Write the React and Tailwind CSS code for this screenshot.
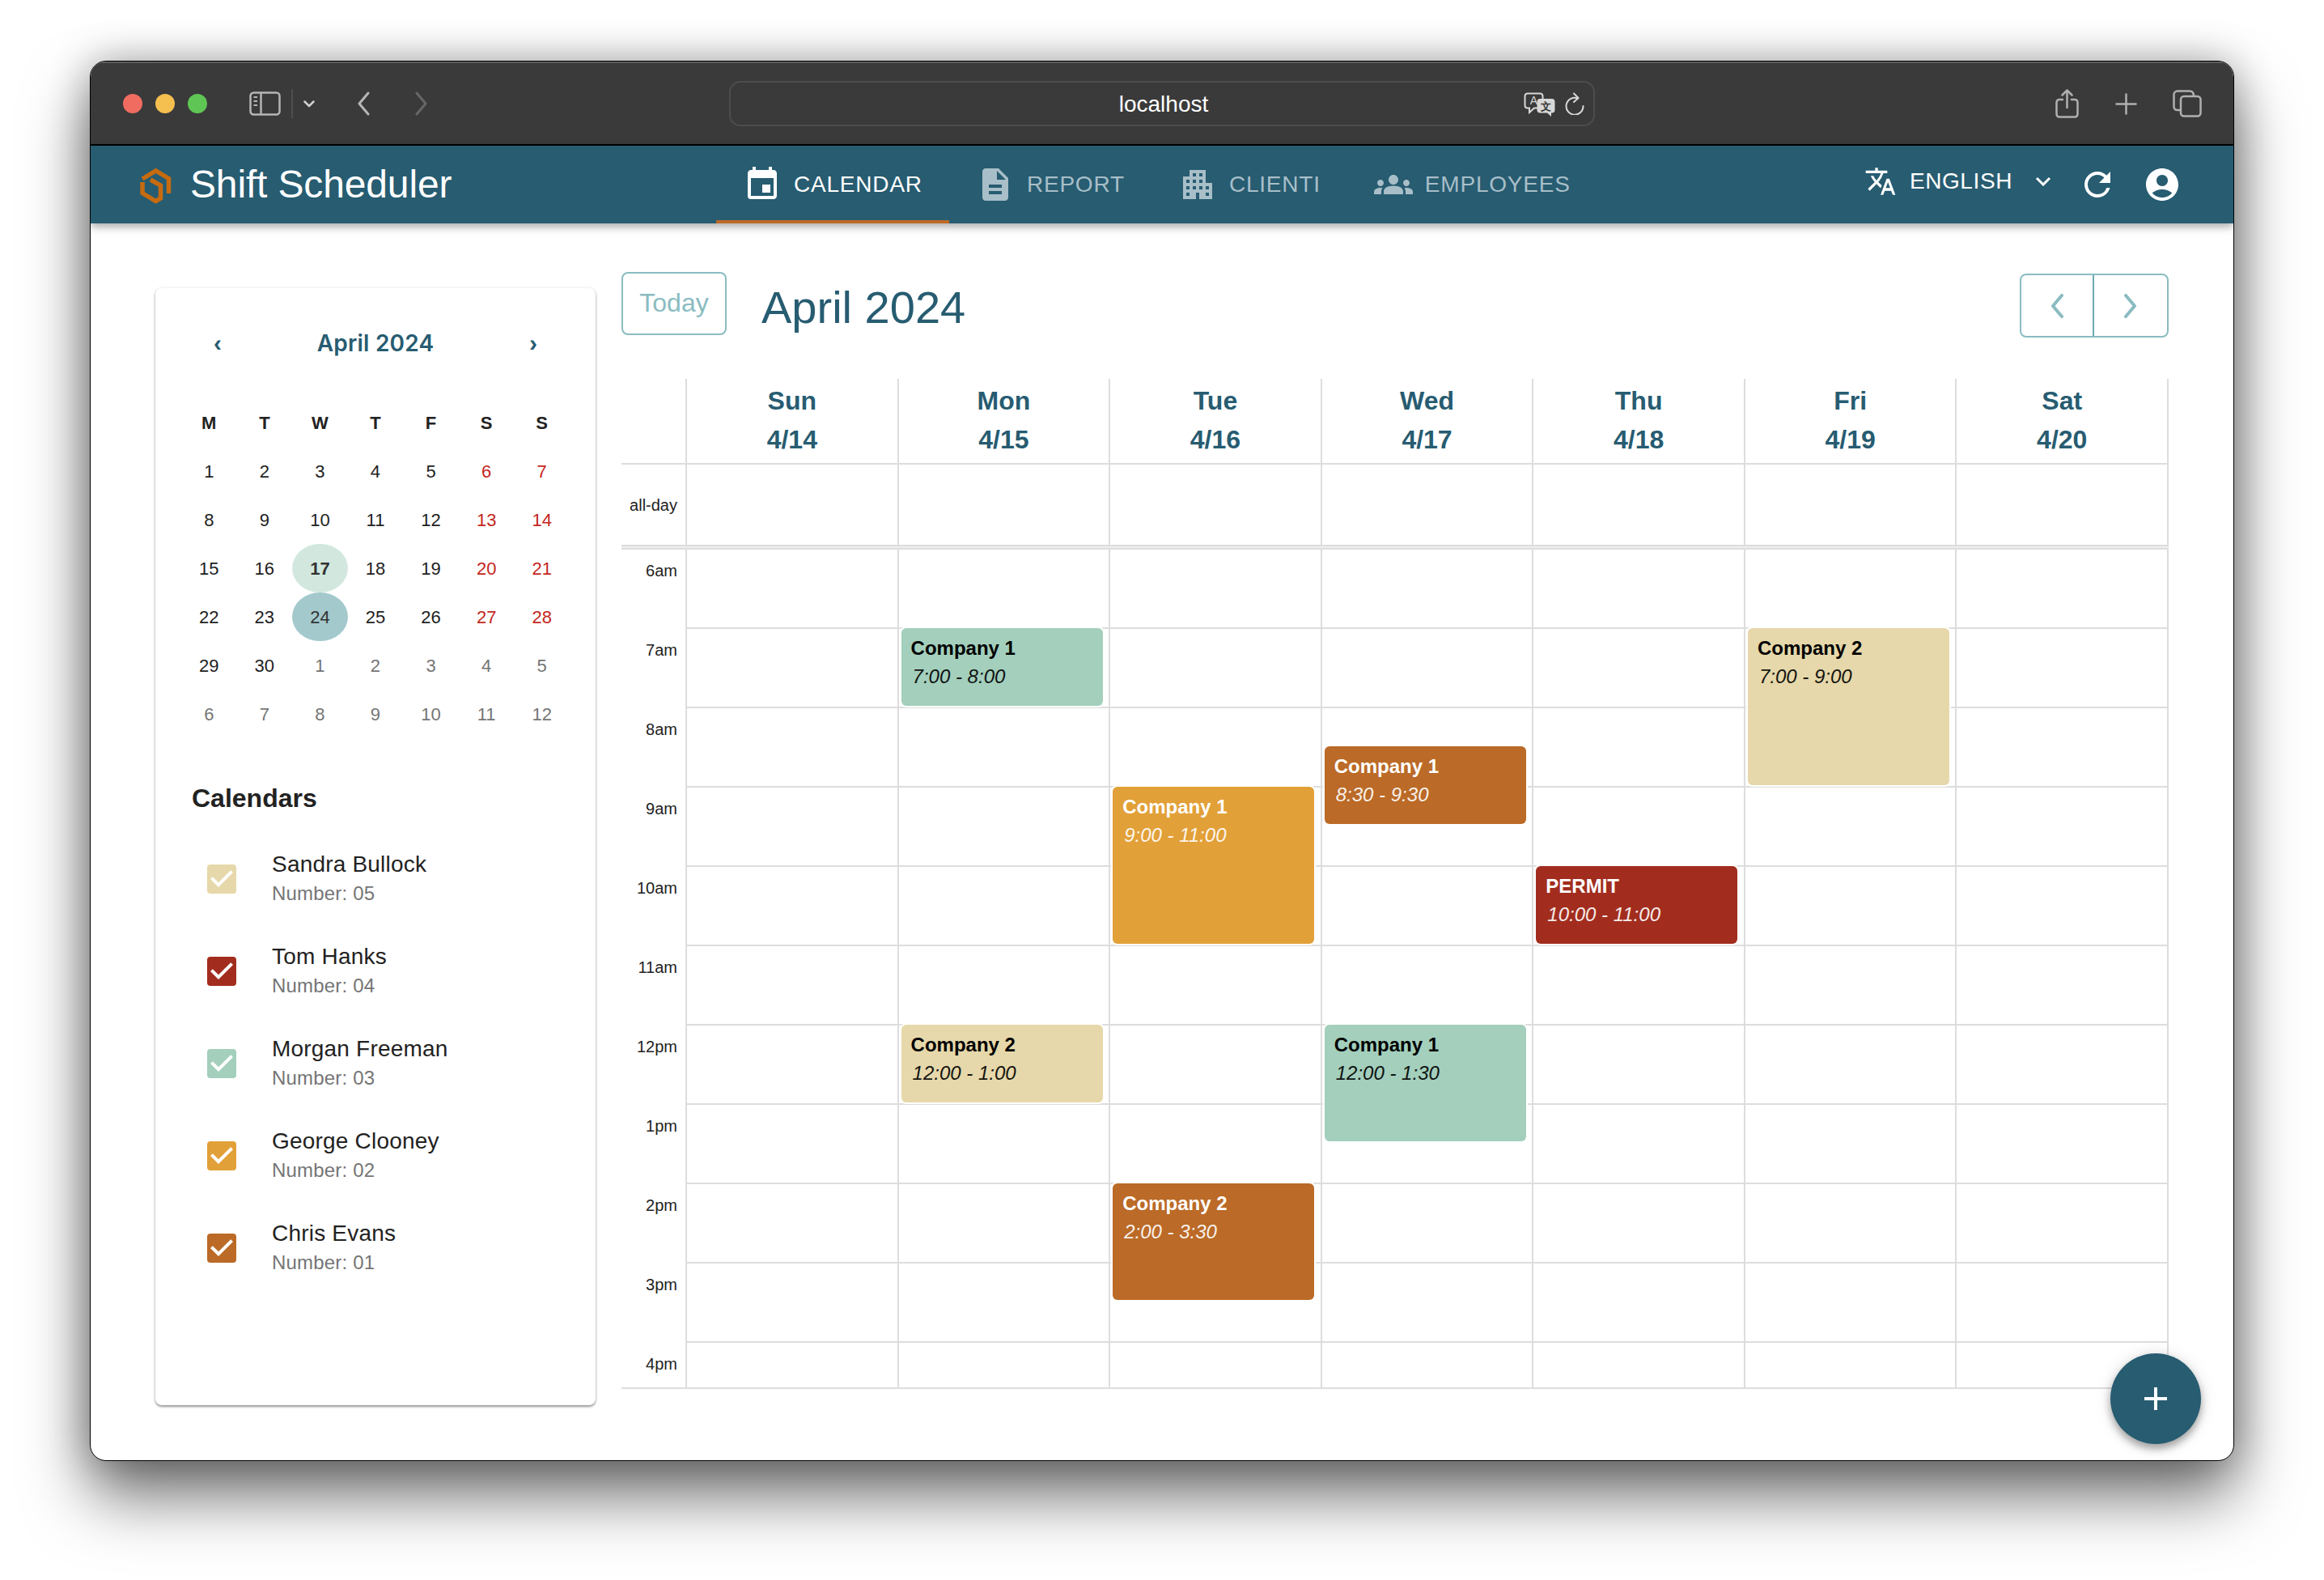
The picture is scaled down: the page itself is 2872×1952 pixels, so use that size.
import React from 'react';
import { MdEvent, MdDescription, MdApartment, MdGroups, MdTranslate, MdRefresh, MdAccountCircle, MdAdd, MdCheckBox } from 'react-icons/md';

const tabs = [
    { label: 'CALENDAR', Icon: MdEvent, active: true },
    { label: 'REPORT', Icon: MdDescription },
    { label: 'CLIENTI', Icon: MdApartment },
    { label: 'EMPLOYEES', Icon: MdGroups },
];

const weeks = [
    [1, 2, 3, 4, 5, 6, 7],
    [8, 9, 10, 11, 12, 13, 14],
    [15, 16, 17, 18, 19, 20, 21],
    [22, 23, 24, 25, 26, 27, 28],
    [29, 30, 1, 2, 3, 4, 5],
    [6, 7, 8, 9, 10, 11, 12],
];

const people = [
    { name: 'Sandra Bullock', number: '05', color: 'text-[#e6d8aa]' },
    { name: 'Tom Hanks', number: '04', color: 'text-[#a22d1e]' },
    { name: 'Morgan Freeman', number: '03', color: 'text-[#a3cfbc]' },
    { name: 'George Clooney', number: '02', color: 'text-[#e2a038]' },
    { name: 'Chris Evans', number: '01', color: 'text-[#bb6a27]' },
];

const hours = ['6am', '7am', '8am', '9am', '10am', '11am', '12pm', '1pm', '2pm', '3pm', '4pm'];

const days = [
    { name: 'Sun', date: '4/14', events: [] },
    {
        name: 'Mon',
        date: '4/15',
        events: [
            { title: 'Company 1', time: '7:00 - 8:00', place: 'top-[97px] h-[96px]', tone: 'bg-[#a3cfbc] text-black' },
            { title: 'Company 2', time: '12:00 - 1:00', place: 'top-[587px] h-[96px]', tone: 'bg-[#e6d8aa] text-black' },
        ],
    },
    {
        name: 'Tue',
        date: '4/16',
        events: [
            { title: 'Company 1', time: '9:00 - 11:00', place: 'top-[293px] h-[194px]', tone: 'bg-[#e2a038] text-white' },
            { title: 'Company 2', time: '2:00 - 3:30', place: 'top-[783px] h-[144px]', tone: 'bg-[#bb6a27] text-white' },
        ],
    },
    {
        name: 'Wed',
        date: '4/17',
        events: [
            { title: 'Company 1', time: '8:30 - 9:30', place: 'top-[243px] h-[96px]', tone: 'bg-[#bb6a27] text-white' },
            { title: 'Company 1', time: '12:00 - 1:30', place: 'top-[587px] h-[144px]', tone: 'bg-[#a3cfbc] text-black' },
        ],
    },
    {
        name: 'Thu',
        date: '4/18',
        events: [
            { title: 'PERMIT', time: '10:00 - 11:00', place: 'top-[391px] h-[96px]', tone: 'bg-[#a22d1e] text-white' },
        ],
    },
    {
        name: 'Fri',
        date: '4/19',
        events: [
            { title: 'Company 2', time: '7:00 - 9:00', place: 'top-[97px] h-[194px]', tone: 'bg-[#e6d8aa] text-black' },
        ],
    },
    { name: 'Sat', date: '4/20', events: [] },
];

function Chevron({ dir, className, weight = 3 }) {
    return (
        <svg width="16" height="30" viewBox="0 0 16 30" fill="none" stroke="currentColor" strokeWidth={weight} strokeLinecap="round" strokeLinejoin="round" className={className}>
            <path d={dir === 'left' ? 'M14 2 L3 15 L14 28' : 'M2 2 L13 15 L2 28'} />
        </svg>
    );
}

function BrowserBar() {
    return (
        <div className="flex items-center h-[104px] shrink-0 pl-[40px] bg-[#3a3a3a] border-t-2 border-b-2 border-t-[#5c5c5c] border-b-black">
            <div className="flex gap-4">
                <span className="w-6 h-6 rounded-full bg-[#f16c60]" />
                <span className="w-6 h-6 rounded-full bg-[#f5bf4f]" />
                <span className="w-6 h-6 rounded-full bg-[#5fc655]" />
            </div>
            {/* sidebar toggle */}
            <svg width="39" height="30" viewBox="0 0 39 30" fill="none" stroke="#b5b5b5" strokeWidth="2.5" className="ml-[52px]">
                <rect x="1.5" y="1.5" width="36" height="27" rx="4" />
                <path d="M14.5 1.5V28.5" />
                <path d="M5.5 7H10M5.5 12H10M5.5 17H10" strokeWidth="2" />
            </svg>
            <div className="w-0.5 h-9 ml-[13px] bg-[#4e4e4e]" />
            <svg width="14" height="9" viewBox="0 0 14 9" fill="none" stroke="#d0d0d0" strokeWidth="2.5" strokeLinecap="round" strokeLinejoin="round" className="ml-[13px]">
                <path d="M1.5 1.5 L7 7 L12.5 1.5" />
            </svg>
            <Chevron dir="left" className="ml-[52px] text-[#b5b5b5]" />
            <Chevron dir="right" className="ml-[56px] text-[#666666]" />
            <div className="relative flex items-center justify-center w-[1070px] h-[56px] ml-[372px] rounded-[14px] border-2 border-[#4d4d4d] text-[28px] text-white">
                <span className="ml-[4px] mt-px">localhost</span>
                {/* page translate */}
                <svg width="40" height="30" viewBox="0 0 40 30" className="absolute right-[46px] top-[12px]">
                    <path d="M5 1.5H20C22 1.5 23.5 3 23.5 5V16C23.5 18 22 19.5 20 19.5H13L7 25V19.5H5C3 19.5 1.5 18 1.5 16V5C1.5 3 3 1.5 5 1.5Z" fill="#3a3a3a" stroke="#d8d8d8" strokeWidth="2" />
                    <text x="12.5" y="15" fontSize="14" fill="#d8d8d8" textAnchor="middle">A</text>
                    <path d="M20 8H35C37 8 38.5 9.5 38.5 12V22C38.5 24 37 25.5 35 25.5H34V30L29 25.5H20C18 25.5 16.5 24 16.5 22V12C16.5 9.5 18 8 20 8Z" fill="#d8d8d8" />
                    <text x="27.5" y="22" fontSize="13" fontWeight="700" fill="#3a3a3a" textAnchor="middle">文</text>
                </svg>
                <svg width="24" height="28" viewBox="0 0 24 28" fill="none" stroke="#d8d8d8" strokeWidth="2" strokeLinecap="round" strokeLinejoin="round" className="absolute right-[11px] top-[12px]">
                    <path d="M16 7.5A10.5 10.5 0 1 0 22.5 17" />
                    <path d="M11 1.5L16.5 7L11 12" />
                </svg>
            </div>
            {/* share */}
            <svg width="29" height="36" viewBox="0 0 29 36" fill="none" stroke="#b0b0b0" strokeWidth="2.5" strokeLinecap="round" strokeLinejoin="round" className="ml-[569px]">
                <path d="M9 13H5C3 13 1.5 14.5 1.5 16.5V31C1.5 33 3 34.5 5 34.5H24C26 34.5 27.5 33 27.5 31V16.5C27.5 14.5 26 13 24 13H20" />
                <path d="M14.5 23V2M8.5 7.5L14.5 1.5L20.5 7.5" />
            </svg>
            <svg width="27" height="27" viewBox="0 0 27 27" fill="none" stroke="#b0b0b0" strokeWidth="2.5" strokeLinecap="round" className="ml-[45px]">
                <path d="M13.5 1.5V25.5M1.5 13.5H25.5" />
            </svg>
            <svg width="36" height="34" viewBox="0 0 36 34" fill="none" stroke="#b0b0b0" strokeWidth="2.5" className="ml-[44px]">
                <rect x="10" y="8" width="24.5" height="24.5" rx="4" />
                <path d="M10 25H6C3.500 25 1.500 23.500 1.500 21V6C1.500 3.500 3.500 1.500 6 1.500H21C24 1.500 26 3.500 26 8" />
            </svg>
        </div>
    );
}

function AppBar() {
    return (
        <div className="relative z-10 flex items-center h-[96px] shrink-0 bg-[#275c71] text-white shadow-[0_4px_10px_rgba(0,0,0,0.35)]">
            <div className="flex items-center w-[773px] pl-[53px]">
                <svg width="54" height="54" viewBox="0 0 54 54" fill="none" stroke="#c76b10" strokeWidth="5.500">
                    <path d="M11 20 L27.500 10 L43.500 19.500 L43.500 38" />
                    <path d="M21 21 L33.500 28 L33.500 44 L27.500 47.500 L11 37.500 L11 24" />
                </svg>
                <span className="ml-[16px] text-[48px] leading-none tracking-[-0.15px]">Shift Scheduler</span>
            </div>
            <div className="flex h-full">
                {tabs.map(({ label, Icon, active }) => (
                    <div key={label} className={`relative flex items-center gap-[15px] px-[33px] h-full text-[28px] tracking-[0.8px] ${active ? 'text-white' : 'text-[#a8bec8]'}`}>
                        <Icon className="text-[48px]" />
                        <span>{label}</span>
                        {active && <span className="absolute left-0 right-0 bottom-0 h-1 bg-[#bb6a27]" />}
                    </div>
                ))}
            </div>
            <div className="flex items-center ml-auto pr-[64px]">
                <div className="flex items-center mb-2">
                    <MdTranslate className="text-[40px]" />
                    <span className="ml-[16px] text-[28px] tracking-[0.6px]">ENGLISH</span>
                    <svg width="20" height="12" viewBox="0 0 20 12" fill="none" stroke="white" strokeWidth="3" className="ml-[28px]">
                        <path d="M2 2 L10 10 L18 2" />
                    </svg>
                </div>
                <MdRefresh className="text-[48px] ml-[33px]" />
                <MdAccountCircle className="text-[48px] ml-[32px]" />
            </div>
        </div>
    );
}

function MiniCalendar() {
    return (
        <div className="px-[32px]">
            <div className="flex items-center justify-between h-[136px] px-[40px]">
                <span className="text-[30px] font-bold leading-none text-[#275c71]">‹</span>
                <span className="font-['Inter',sans-serif] text-[28px] font-semibold tracking-[0.2px] text-[#275c71]">April 2024</span>
                <span className="text-[30px] font-bold leading-none text-[#275c71]">›</span>
            </div>
            <div className="grid grid-cols-7 auto-rows-[60px] text-[22px] text-[#222222] items-center justify-items-stretch">
                {['M', 'T', 'W', 'T', 'F', 'S', 'S'].map((d, i) => (
                    <div key={i} className="flex items-center justify-center h-full font-bold">{d}</div>
                ))}
                {weeks.map((week, w) =>
                    week.map((d, i) => {
                        const outside = (w === 4 && i > 1) || w === 5;
                        let cls = '';
                        if (outside) cls = 'text-[#757575]';
                        else if (i > 4) cls = 'text-[#c4261d]';
                        if (d === 17 && !outside) cls = 'bg-[#d2e8de] rounded-[50%] font-bold text-[#333333]';
                        if (d === 24 && !outside) cls = 'bg-[#a3c9cd] rounded-[50%] text-[#333333]';
                        return (
                            <div key={`${w}-${i}`} className={`flex items-center justify-center h-full ${cls}`}>{d}</div>
                        );
                    })
                )}
            </div>
        </div>
    );
}

function Sidebar() {
    return (
        <div className="w-[544px] h-[1380px] mt-[80px] ml-[80px] shrink-0 rounded-lg bg-white shadow-[0_2px_3px_rgba(0,0,0,0.4),0_0_4px_rgba(0,0,0,0.08)]">
            <MiniCalendar />
            <h2 className="mt-[54px] ml-[45px] text-[32px] leading-[40px] font-bold text-[#222222]">Calendars</h2>
            <div className="mt-[23px]">
                {people.map((p) => (
                    <div key={p.name} className="flex items-center h-[114px] pl-[58px]">
                        <MdCheckBox className={`text-[48px] ${p.color}`} />
                        <div className="ml-[38px]">
                            <div className="text-[28px] leading-[36px] tracking-[0.2px] text-[#222222]">{p.name}</div>
                            <div className="text-[24px] leading-[36px] tracking-[0.2px] text-[#757575]">Number: {p.number}</div>
                        </div>
                    </div>
                ))}
            </div>
        </div>
    );
}

function WeekGrid() {
    return (
        <div className="grid grid-cols-[79px_1fr]">
            {/* column heads */}
            <div className="col-span-2 flex h-[106px] border-b-2 border-[#dddddd]">
                <div className="w-[79px] shrink-0" />
                {days.map((d) => (
                    <div key={d.name} className="flex-1 border-l-2 last:border-r-2 border-[#dddddd] text-center text-[32px] leading-[48px] font-bold text-[#275c71]">
                        <div className="mt-[3px]">{d.name}</div>
                        <div>{d.date}</div>
                    </div>
                ))}
            </div>
            {/* all-day row */}
            <div className="col-span-2 flex h-[99px]">
                <div className="flex items-center justify-end w-[79px] shrink-0 pr-[10px] text-[20px] text-[#222222]">all-day</div>
                {days.map((d) => (
                    <div key={d.name} className="flex-1 border-l-2 last:border-r-2 border-[#dddddd]" />
                ))}
            </div>
            <div className="col-span-2 h-[6px] bg-[#eeeeee] border-y-2 border-[#dddddd]" />
            {/* hours */}
            <div className="col-span-2 flex border-b-2 border-[#dddddd]">
                <div className="w-[79px] shrink-0 text-right pr-[10px] text-[20px] leading-[24px] text-[#222222]">
                    {hours.map((h, i) => (
                        <div key={h} className={i === 0 ? 'h-[96px] pt-[14px]' : i === hours.length - 1 ? 'h-[57px] pt-[16px]' : 'h-[98px] pt-[16px]'}>{h}</div>
                    ))}
                </div>
                {days.map((d) => (
                    <div key={d.name} className="relative flex-1 border-l-2 last:border-r-2 border-[#dddddd]">
                        {hours.map((h, i) => (
                            <div key={h} className={i === 0 ? 'h-[96px]' : i === hours.length - 1 ? 'h-[57px] border-t-2 border-[#dddddd]' : 'h-[98px] border-t-2 border-[#dddddd]'} />
                        ))}
                        {d.events.map((e) => (
                            <div key={e.time} className={`absolute left-[3px] w-[249px] px-3 pt-[11px] rounded-md ring-2 ring-white ${e.place} ${e.tone}`}>
                                <div className="text-[24px] leading-[28px] font-bold">{e.title}</div>
                                <div className="mt-[7px] ml-[2px] text-[24px] leading-[28px] italic opacity-90">{e.time}</div>
                            </div>
                        ))}
                    </div>
                ))}
            </div>
        </div>
    );
}

export default function App() {
    return (
        <div className="w-[2872px] h-[1952px] pt-[75px] pl-[111px] bg-white font-['Liberation_Sans',Arial,sans-serif]">
            <div className="relative flex flex-col w-[2650px] h-[1730px] rounded-[20px] overflow-hidden border border-black bg-white shadow-[0_44px_80px_rgba(0,0,0,0.55),0_0_50px_rgba(0,0,0,0.3)]">
                <BrowserBar />
                <AppBar />
                <div className="flex flex-1">
                    <Sidebar />
                    <div className="w-[1912px] ml-[32px] mt-[60px]">
                        <div className="flex items-start h-[132px]">
                            <button className="w-[130px] h-[78px] pb-[3px] rounded-lg border-2 border-[#8abcc1] text-[32px] text-[#8abcc1]">Today</button>
                            <h1 className="ml-[43px] mt-[8px] text-[56px] leading-[72px] text-[#275c71]">April 2024</h1>
                            <div className="flex ml-auto mt-[2px] h-[79px] rounded-lg border-2 border-[#8abcc1] text-[#8abcc1]">
                                <div className="flex items-center justify-center w-[90px] border-r-2 border-[#6ea9b0]">
                                    <Chevron dir="left" weight={4} />
                                </div>
                                <div className="flex items-center justify-center w-[90px]">
                                    <Chevron dir="right" weight={4} />
                                </div>
                            </div>
                        </div>
                        <WeekGrid />
                    </div>
                </div>
                {/* add shift button */}
                <div className="absolute right-[40px] bottom-[20px] z-20 flex items-center justify-center w-[112px] h-[112px] rounded-full bg-[#275c71] text-white shadow-[0_6px_10px_rgba(0,0,0,0.3),0_2px_20px_rgba(0,0,0,0.15)]">
                    <MdAdd className="text-[48px]" />
                </div>
            </div>
        </div>
    );
}
